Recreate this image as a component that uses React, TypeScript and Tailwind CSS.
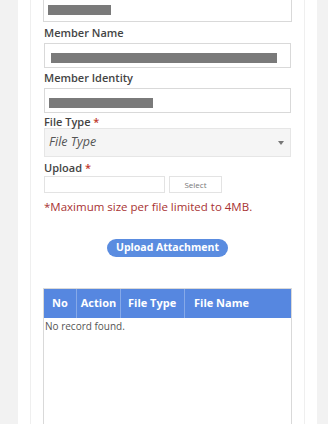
const font = { fontFamily: "'Open Sans', 'Noto Sans', sans-serif" };

const Label = ({ text, required }: { text: string; required?: boolean }) => (
  <div className="text-[11px] font-semibold text-[#444] leading-[13px]">
    {text}
    {required && <span className="text-[#c0392b]"> *</span>}
  </div>
);

const Redacted = ({ w }: { w: string }) => <div className={`h-[10px] bg-[#7a7a7a] ${w}`} />;

export default function App() {
  return (
    <div className="h-[424px] overflow-hidden bg-[#f2f2f2] pl-[18px] pr-[11px]" style={font}>
      <div className="h-full bg-white px-[12px]">
        <div className="h-full border-x border-[#efefef] px-[13px]">
          {/* first input, cut off at the top */}
          <div className="-mx-px h-[22px] border border-t-0 border-[#d9d9d9] px-[4px] pt-[5px]">
            <Redacted w="w-[63px]" />
          </div>

          <div className="mt-[4px]">
            <Label text="Member Name" />
          </div>
          <div className="mt-[4px] h-[25px] border border-[#d9d9d9] px-[6px] pt-[9px]">
            <Redacted w="w-[226px]" />
          </div>

          <div className="mt-[3px]">
            <Label text="Member Identity" />
          </div>
          <div className="mt-[4px] h-[25px] border border-[#d9d9d9] px-[4px] pt-[9px]">
            <Redacted w="w-[104px]" />
          </div>

          <div className="mt-[2px]">
            <Label text="File Type" required />
          </div>
          <div className="flex h-[29px] items-center justify-between border border-[#e6e6e6] bg-[#f5f5f5] pl-[4px] pr-[6px]">
            <span className="text-[12.5px] italic text-[#555]">File Type</span>
            <span className="h-0 w-0 border-x-[3px] border-t-[4px] border-x-transparent border-t-[#777]" />
          </div>

          <div className="mt-[4px]">
            <Label text="Upload" required />
          </div>
          <div className="mt-[2px] flex gap-[4px]">
            <div className="h-[17px] w-[121px] border border-[#e3e3e3]" />
            <div className="flex h-[17px] w-[53px] items-center justify-center border border-[#e3e3e3] text-[8px] text-[#777]">
              Select
            </div>
          </div>

          <div className="mt-[6px] text-[11.5px] leading-[16px] text-[#a83232]">
            *Maximum size per file limited to 4MB.
          </div>

          <div className="mt-[24px] flex justify-center">
            <div className="flex h-[18px] w-[121px] items-center justify-center rounded-full bg-[#5a8ce0] text-[10.5px] font-bold text-white">
              Upload Attachment
            </div>
          </div>

          <div className="-mx-px mt-[31px] h-[200px] border border-[#d9d9d9]">
            <div className="flex h-[29px] bg-[#5687e0] text-[11px] font-bold text-white">
              <div className="flex w-[33px] items-center justify-center border-r border-[#86a9e8]">No</div>
              <div className="flex w-[44px] items-center justify-center border-r border-[#86a9e8]">Action</div>
              <div className="flex w-[64px] items-center border-r border-[#86a9e8] pl-[7px]">File Type</div>
              <div className="flex flex-1 items-center pl-[9px]">File Name</div>
            </div>
            <div className="px-[1px] pt-[1px] text-[10px] text-[#555]">No record found.</div>
          </div>
        </div>
      </div>
    </div>
  );
}
